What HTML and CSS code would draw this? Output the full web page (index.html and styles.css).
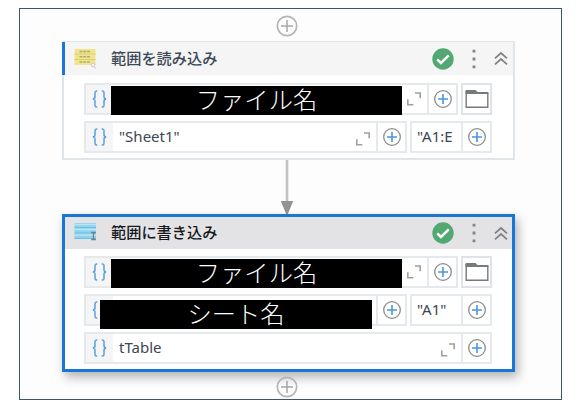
FILE: index.html
```
<!DOCTYPE html>
<html lang="ja">
<head>
  <meta charset="UTF-8">
  <meta name="viewport" content="width=device-width, initial-scale=1.0">
  <title>ワークフロー</title>
  <link rel="stylesheet" href="styles.css">
</head>
<body>
  <!-- アイコン定義 -->
  <svg class="defs" width="0" height="0">
    <symbol id="add" viewBox="0 0 22 22">
      <circle cx="11" cy="11" r="9.7" fill="none" stroke="#b5b5b5" stroke-width="1.7"/>
      <path d="M5 11h12M11 5v12" stroke="#a6a6a6" stroke-width="1.5"/>
    </symbol>
    <symbol id="plus" viewBox="0 0 20 20">
      <circle cx="10" cy="10" r="8.3" fill="none" stroke="#8b8b8b" stroke-width="1.3"/>
      <path d="M5 10h10M10 5v10" stroke="#4a96e0" stroke-width="1.6"/>
    </symbol>
    <symbol id="expand" viewBox="0 0 16 16">
      <path d="M9 2h5.2v5.3M1.8 8.3v5.5H7.3" fill="none" stroke="#a0a0a0" stroke-width="1.6"/>
    </symbol>
    <symbol id="folder" viewBox="0 0 24 20">
      <path d="M.5 2Q.5 1 1.5 1h9l2 2H22q1.5 0 1.5 1.2V5H.5z" fill="#77797b"/>
      <path d="M1.2 2v16.2h21.6V4.2H1.2" fill="none" stroke="#77797b" stroke-width="1.4"/>
    </symbol>
    <symbol id="check" viewBox="0 0 22 22">
      <circle cx="11" cy="11" r="10.7" fill="#51a871"/>
      <path d="M5.2 11.4l3.7 3.5 7.9-7.6" fill="none" stroke="#fff" stroke-width="2.5"/>
    </symbol>
    <symbol id="dots" viewBox="0 0 4 20">
      <path d="M.6.7h2.8v2.8H.6zM.6 8.6h2.8v2.8H.6zM.6 16.5h2.8v2.8H.6z" fill="#848484"/>
    </symbol>
    <symbol id="collapse" viewBox="0 0 14 15">
      <path d="M1 7.3l6-5.3 6 5.3M1 13.3L7 8l6 5.3" fill="none" stroke="#808080" stroke-width="1.7"/>
    </symbol>
    <symbol id="braces" viewBox="0 0 16 18">
      <path d="M5.3 1H4.5Q3 1 3 2.8V6.5Q3 9 .8 9 3 9 3 11.5v3.7Q3 17 4.5 17h.8M9.7 1h.8Q12 1 12 2.8V6.5Q12 9 14.2 9 12 9 12 11.5v3.7Q12 17 10.5 17h-.8" fill="none" stroke="#5a9fe0" stroke-width="1.5"/>
    </symbol>
  </svg>

  <div class="canvas">
    <svg class="add"><use href="#add"/></svg>

    <!-- 範囲を読み込み -->
    <section class="activity">
      <header class="activity-head">
        <svg class="type-icon" viewBox="0 0 23 22">
          <rect x=".5" y="1" width="21" height="16" fill="#eee58c"/>
          <path d="M.5 6h21M.5 11.5h21" stroke="#d8cf7b"/>
          <path d="M5.5 3.5h10.5M5.5 8.8h10.5M5.5 14h10.5" stroke="#b5ad68" stroke-width="1.6" stroke-dasharray="3 .8"/>
          <circle cx="19" cy="17" r="1.8" fill="#f5f5f5" stroke="#ccc"/>
          <path d="M20 18.5l1.5 2" stroke="#c4c4c4"/>
        </svg>
        <h2>範囲を読み込み</h2>
        <svg class="check"><use href="#check"/></svg>
        <svg class="dots"><use href="#dots"/></svg>
        <svg class="collapse"><use href="#collapse"/></svg>
      </header>
      <div class="rows">
        <div class="row">
          <div class="field">
            <span class="braces"><svg><use href="#braces"/></svg></span>
            <span class="mask file">ファイル名</span>
            <svg class="expand"><use href="#expand"/></svg>
            <span class="plus"><svg><use href="#plus"/></svg></span>
          </div>
          <button class="folder"><svg><use href="#folder"/></svg></button>
        </div>
        <div class="row">
          <div class="field">
            <span class="braces"><svg><use href="#braces"/></svg></span>
            <span class="value">"Sheet1"</span>
            <svg class="expand low"><use href="#expand"/></svg>
            <span class="plus"><svg><use href="#plus"/></svg></span>
          </div>
          <div class="field cell">
            <span class="value">"A1:E</span>
            <span class="plus"><svg><use href="#plus"/></svg></span>
          </div>
        </div>
      </div>
    </section>

    <svg class="arrow" viewBox="0 0 14 54">
      <path d="M7 0v43" stroke="#c3c3c3" stroke-width="2.6"/>
      <path d="M.8 41h12.4L7.8 54H6.2z" fill="#929292"/>
    </svg>

    <!-- 範囲に書き込み -->
    <section class="activity selected">
      <header class="activity-head">
        <svg class="type-icon" viewBox="0 0 23 22">
          <rect x=".5" y="1" width="21.5" height="16" fill="#8cd3ee"/>
          <path d="M.5 2.5h21.5M.5 7.5h21.5M.5 13h21.5" stroke="#b9e5f5" stroke-width="1.4"/>
          <path d="M.5 5.5h21.5M.5 11h21.5M.5 16.5h21.5" stroke="#70bfe0"/>
          <path d="M17.2 10.5h4.6M19.5 10.5v7M17.2 17.5h4.6" fill="none" stroke="#6d7f89" stroke-width="1.3"/>
        </svg>
        <h2>範囲に書き込み</h2>
        <svg class="check"><use href="#check"/></svg>
        <svg class="dots"><use href="#dots"/></svg>
        <svg class="collapse"><use href="#collapse"/></svg>
      </header>
      <div class="rows">
        <div class="row">
          <div class="field">
            <span class="braces"><svg><use href="#braces"/></svg></span>
            <span class="mask file">ファイル名</span>
            <svg class="expand"><use href="#expand"/></svg>
            <span class="plus"><svg><use href="#plus"/></svg></span>
          </div>
          <button class="folder"><svg><use href="#folder"/></svg></button>
        </div>
        <div class="row">
          <div class="field">
            <span class="braces"><svg><use href="#braces"/></svg></span>
            <span class="mask sheet">シート名</span>
            <span class="plus"><svg><use href="#plus"/></svg></span>
          </div>
          <div class="field cell">
            <span class="value">"A1"</span>
            <span class="plus"><svg><use href="#plus"/></svg></span>
          </div>
        </div>
        <div class="row">
          <div class="field">
            <span class="braces"><svg><use href="#braces"/></svg></span>
            <span class="value">tTable</span>
            <svg class="expand low"><use href="#expand"/></svg>
            <span class="plus"><svg><use href="#plus"/></svg></span>
          </div>
        </div>
      </div>
    </section>

    <svg class="add"><use href="#add"/></svg>
  </div>
</body>
</html>
```
FILE: styles.css
```
* {
  margin: 0;
  padding: 0;
  box-sizing: border-box;
}

body {
  background: #fff;
  font-family: "Noto Sans", "Noto Sans CJK JP", sans-serif;
  overflow: hidden;
}

svg {
  display: block;
  flex: none;
}

.defs {
  position: absolute;
}

/* キャンバス */
.canvas {
  width: 543px;
  height: 392px;
  margin: 8px 0 0 19px;
  padding: 6px 46px 0 42px;
  border: 1px solid #3f5668;
  background: #fdfdfd;
  display: flex;
  flex-direction: column;
  align-items: center;
}

.add {
  width: 22px;
  height: 22px;
  margin-right: 4px;
}

.arrow {
  width: 14px;
  height: 54px;
  margin-right: 4px;
}

/* アクティビティ */
.activity {
  width: 453px;
  height: 119px;
  margin-top: 4px;
  border: 2px solid #dfe5e9;
  background: #fff;
  flex: none;
}

.activity-head {
  display: flex;
  align-items: center;
  height: 33px;
  margin-left: -2px;
  margin-top: -1px;
  padding: 0 5px 0 10px;
  border-left: 3px solid #1976d6;
  background: #f5f5f5;
}

.activity-head h2 {
  flex: 1;
  padding-bottom: 3px;
  font-family: "Noto Sans CJK JP", sans-serif;
  font-size: 15.2px;
  font-weight: 500;
  line-height: 22px;
  color: #3c4856;
}

.type-icon {
  width: 23px;
  height: 22px;
  margin-right: 13px;
  margin-left: -1px;
}

.activity-head h2 {
  margin-left: 1px;
}

.check {
  width: 22px;
  height: 22px;
}

.dots {
  width: 4px;
  height: 20px;
  margin: 0 18px 0 18px;
}

.collapse {
  width: 14px;
  height: 15px;
}

.activity.selected {
  height: 158px;
  margin: 0 0 4px;
  border: 3px solid #1976d6;
  box-shadow: 3px 5px 10px rgba(0, 0, 0, .3);
}

.selected .activity-head {
  height: 32px;
  margin: 0;
  padding: 0 4px 0 10px;
  border-left: 0;
  background: #e3e3e5;
}

.selected h2 {
  padding-bottom: 5px;
  color: #17191c;
}

/* 入力欄 */
.rows {
  display: flex;
  flex-direction: column;
  gap: 6px;
  padding: 8px 21px 0 20px;
}

.selected .rows {
  padding: 7px 20px 0 19px;
}

.row {
  display: flex;
  gap: 3px;
  height: 32px;
}

.field {
  display: flex;
  flex: 1;
  align-items: center;
  border: 2px solid #e4e9ed;
  background: #fff;
}

.field.cell {
  flex: none;
  width: 82px;
}

.braces {
  display: flex;
  flex: none;
  align-items: center;
  width: 27px;
  height: 28px;
  padding-left: 6px;
  background: #f5f5f5;
}

.braces svg {
  width: 16px;
  height: 18px;
}

.value {
  flex: 1;
  padding: 0 0 3px 6px;
  font-size: 15px;
  line-height: 22px;
  color: #3d4652;
  white-space: nowrap;
}

.cell .value {
  padding-left: 5px;
}

.mask {
  flex: none;
  height: 29px;
  background: #000;
  color: #fff;
  font-family: "Noto Sans CJK JP", sans-serif;
  font-size: 24.3px;
  font-weight: 300;
  line-height: 26px;
  text-align: center;
  white-space: nowrap;
  z-index: 1;
}

.mask.file {
  width: 291px;
  margin: 3px auto 0 -2px;
}

.mask.sheet {
  width: 272px;
  margin: 8px auto 0 -13px;
}

.expand {
  width: 16px;
  height: 16px;
  margin-right: 5px;
}

.expand.low {
  margin-top: 3px;
}

.plus {
  display: flex;
  flex: none;
  align-items: center;
  justify-content: center;
  width: 29px;
  height: 28px;
  border-left: 2px solid #e4e9ed;
}

.plus svg {
  width: 20px;
  height: 20px;
}

.folder {
  display: flex;
  align-items: center;
  justify-content: center;
  width: 31px;
  border: 2px solid #dfe1ed;
  background: #fff;
}

.folder svg {
  width: 24px;
  height: 20px;
}
```
